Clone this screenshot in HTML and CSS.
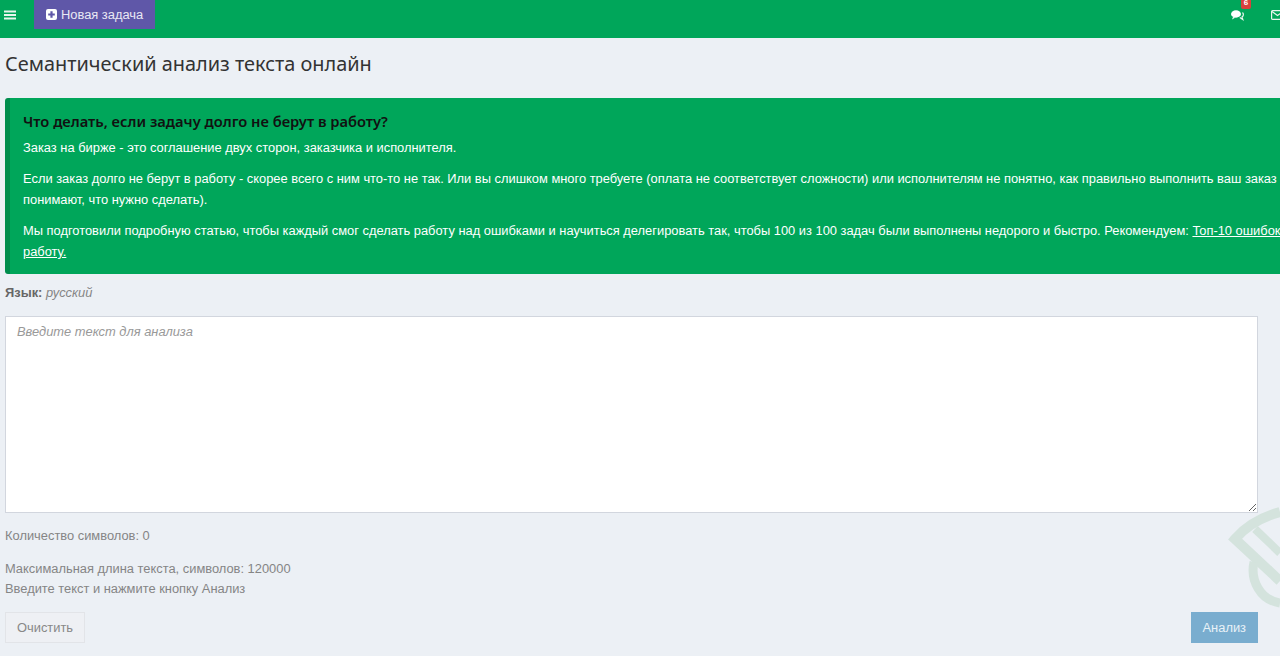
FILE: index.html
```html
<!DOCTYPE html>
<html lang="ru">
<head>
<meta charset="utf-8">
<title>Семантический анализ текста онлайн</title>
<link rel="stylesheet" href="styles.css">
</head>
<body>
<header class="topbar">
  <a class="burger" href="#" aria-label="Меню">
    <svg width="12" height="10" viewBox="0 0 12 10"><path d="M0 0.5h12v2H0zM0 4h12v2H0zM0 7.5h12v2H0z" fill="#e8f5ee"/></svg>
  </a>
  <a class="newtask" href="#">
    <svg width="11" height="11" viewBox="0 0 11 11"><path fill-rule="evenodd" d="M2 0h7a2 2 0 0 1 2 2v7a2 2 0 0 1-2 2H2a2 2 0 0 1-2-2V2a2 2 0 0 1 2-2zM4.4 2.2v2.2H2.2v2.2h2.2v2.2h2.2V6.6h2.2V4.4H6.600V2.2z" fill="#fff"/></svg>
    <span>Новая задача</span>
  </a>
  <div class="topicons">
    <a class="chat" href="#" aria-label="Сообщения">
      <svg width="15" height="13" viewBox="0 0 15 13"><ellipse cx="6" cy="5" rx="5" ry="3.700" fill="#fff"/><path d="M3 8l-1 2.500 3.500-2z" fill="#fff"/><path d="M12.500 3.500c1.500 1.500 1 3.500-.5 4.500l.8 2.500-3-2" fill="none" stroke="#e8f5ee" stroke-width="1.200"/></svg>
      <b class="badge">6</b>
    </a>
    <a class="mail" href="#" aria-label="Почта">
      <svg width="13" height="10" viewBox="0 0 13 10"><rect x="0.600" y="0.600" width="11.800" height="8.800" rx="1" fill="none" stroke="#e8f5ee" stroke-width="1.200"/><path d="M1 1.500l5.500 4 5.500-4" fill="none" stroke="#e8f5ee" stroke-width="1.200"/></svg>
    </a>
  </div>
</header>

<main class="page">
  <h1 class="title">Семантический анализ текста онлайн</h1>

  <section class="notice">
    <h2>Что делать, если задачу долго не берут в работу?</h2>
    <p>Заказ на бирже - это соглашение двух сторон, заказчика и исполнителя.</p>
    <p>Если заказ долго не берут в работу - скорее всего с ним что-то не так. Или вы слишком много требуете (оплата не соответствует сложности) или исполнителям не понятно, как правильно выполнить ваш заказ (не понимают, что нужно сделать).</p>
    <p>Мы подготовили подробную статью, чтобы каждый смог сделать работу над ошибками и научиться делегировать так, чтобы 100 из 100 задач были выполнены недорого и быстро. Рекомендуем: <a href="#">Топ-10 ошибок работу.</a></p>
  </section>

  <form class="form">
    <div class="lang"><strong>Язык:</strong> <em>русский</em></div>
    <textarea class="input" placeholder="Введите текст для анализа"></textarea>
    <p class="count">Количество символов: 0</p>
    <p class="hints">Максимальная длина текста, символов: 120000<br>Введите текст и нажмите кнопку Анализ</p>
    <div class="actions">
      <button class="btn clear" type="button">Очистить</button>
      <button class="btn run" type="button">Анализ</button>
    </div>
  </form>
</main>

<svg class="watermark" width="60" height="115" viewBox="0 0 60 115" aria-hidden="true">
  <g fill="none" stroke="#d4e3dd">
    <path stroke-width="10" d="M60 12C42 17 26 26 15 39L60 81"/>
    <path stroke-width="8" d="M35 29L60 53"/>
    <path stroke-width="9" d="M34 62C30 80 40 100 60 103"/>
  </g>
</svg>
</body>
</html>
```

FILE: styles.css
```css
* { box-sizing: border-box; }

html, body {
  margin: 0;
  height: 100%;
  overflow: hidden;
}

body {
  background: #ecf0f5;
  color: #858585;
  font-family: "Liberation Sans", Arial, sans-serif;
  font-size: 12.880px;
  line-height: 20px;
}

.topbar {
  display: flex;
  align-items: flex-start;
  height: 38px;
  background: #00a65a;
}

.burger {
  display: flex;
  align-items: center;
  width: 34px;
  height: 29px;
  padding-left: 4px;
}

.newtask {
  display: flex;
  align-items: center;
  gap: 4px;
  height: 29px;
  padding: 0 12px;
  background: #5f57a8;
  color: #e9e8f4;
  font-size: 12.880px;
  text-decoration: none;
}

.topicons {
  display: flex;
  margin-left: auto;
  margin-right: -4px;
}

.chat {
  position: relative;
  display: flex;
  align-items: center;
  height: 29px;
  margin-right: 26px;
  padding-top: 1px;
}

.badge {
  position: absolute;
  top: -3px;
  left: 11px;
  width: 10px;
  height: 12px;
  border-radius: 2px;
  background: #d9413c;
  color: #fff;
  font-size: 8px;
  line-height: 12px;
  text-align: center;
}

.mail {
  display: flex;
  align-items: center;
  height: 29px;
  padding-top: 1px;
}

.page {
  padding-left: 5px;
}

.title {
  margin: 14px 0 22px;
  color: #333;
  font-family: "Noto Sans", sans-serif;
  font-size: 19.900px;
  font-weight: 400;
  line-height: 24px;
}

.notice {
  width: 1310px;
  height: 176px;
  padding: 13px 0 0 13px;
  border-left: 5px solid #008d4c;
  border-radius: 3px;
  background: #00a65a;
  color: #fff;
  line-height: 20px;
}

.notice h2 {
  margin: 0 0 6px;
  color: #111;
  font-family: "Noto Sans", sans-serif;
  font-size: 14.700px;
  font-weight: 600;
  line-height: 20px;
}

.notice p {
  margin: 0 0 10px;
  line-height: 21px;
}

.notice a {
  color: #fff;
  text-decoration: underline;
}

.form {
  display: flex;
  flex-direction: column;
  width: 1253px;
}

.lang {
  margin: 9px 0 13px;
  line-height: 20px;
}

.lang strong {
  color: #666;
}

.input {
  display: block;
  width: 100%;
  height: 197px;
  padding: 5px 11px;
  border: 1px solid #d2d6de;
  background: #fff;
  font: italic 12.880px/20px "Liberation Sans", Arial, sans-serif;
}

.input::placeholder {
  color: #999;
}

.count {
  margin: 13px 0;
}

.hints {
  margin: 0 0 13px;
}

.actions {
  display: flex;
  justify-content: space-between;
}

.btn {
  height: 31px;
  padding: 0 11px;
  border: 1px solid #e2e4e8;
  font: 12.880px "Liberation Sans", Arial, sans-serif;
}

.clear {
  background: #eef0f4;
  color: #888;
}

.run {
  border-color: #79adcf;
  background: #79adcf;
  color: #e8f1f7;
}

.watermark {
  position: absolute;
  right: 0;
  top: 500px;
}
```
